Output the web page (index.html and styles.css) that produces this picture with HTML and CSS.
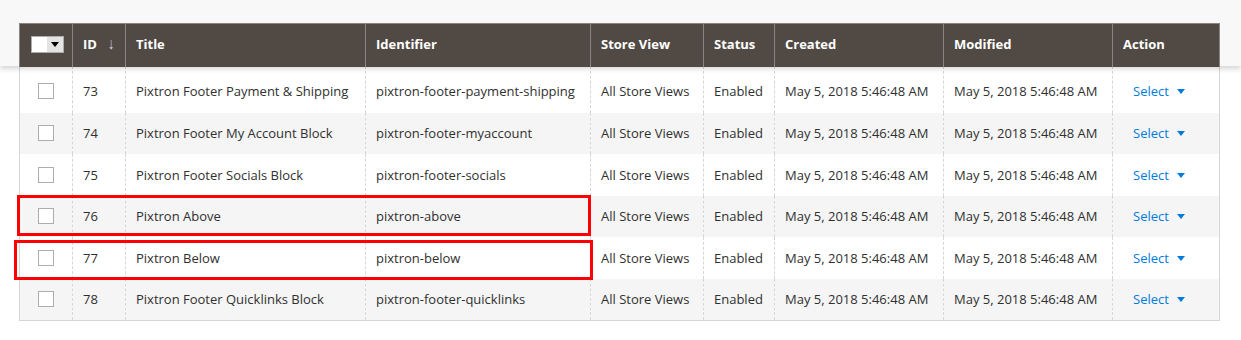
FILE: index.html
```html
<!DOCTYPE html>
<html>
<head>
<meta charset="utf-8">
<link rel="stylesheet" href="styles.css">
</head>
<body>
<div class="sticky">
  <table class="grid head">
    <colgroup><col class="c1"><col class="c2"><col class="c3"><col class="c4"><col class="c5"><col class="c6"><col class="c7"><col class="c8"><col class="c9"></colgroup>
    <tr>
      <th class="mass"><span class="mcheck"><span class="mbox"></span><span class="mdrop"><span class="tri"></span></span></span></th>
      <th>ID<span class="sort">↓</span></th>
      <th>Title</th>
      <th>Identifier</th>
      <th>Store View</th>
      <th>Status</th>
      <th>Created</th>
      <th>Modified</th>
      <th>Action</th>
    </tr>
  </table>
</div>
<table class="grid body">
  <colgroup><col class="c1"><col class="c2"><col class="c3"><col class="c4"><col class="c5"><col class="c6"><col class="c7"><col class="c8"><col class="c9"></colgroup>
  <tr class="first"><td class="cb"><span class="box"></span></td><td>73</td><td>Pixtron Footer Payment &amp; Shipping</td><td>pixtron-footer-payment-shipping</td><td>All Store Views</td><td>Enabled</td><td>May 5, 2018 5:46:48 AM</td><td>May 5, 2018 5:46:48 AM</td><td class="act"><a>Select <span class="atri"></span></a></td></tr>
  <tr class="alt"><td class="cb"><span class="box"></span></td><td>74</td><td>Pixtron Footer My Account Block</td><td>pixtron-footer-myaccount</td><td>All Store Views</td><td>Enabled</td><td>May 5, 2018 5:46:48 AM</td><td>May 5, 2018 5:46:48 AM</td><td class="act"><a>Select <span class="atri"></span></a></td></tr>
  <tr><td class="cb"><span class="box"></span></td><td>75</td><td>Pixtron Footer Socials Block</td><td>pixtron-footer-socials</td><td>All Store Views</td><td>Enabled</td><td>May 5, 2018 5:46:48 AM</td><td>May 5, 2018 5:46:48 AM</td><td class="act"><a>Select <span class="atri"></span></a></td></tr>
  <tr class="alt"><td class="cb"><span class="box"></span></td><td>76</td><td>Pixtron Above</td><td>pixtron-above</td><td>All Store Views</td><td>Enabled</td><td>May 5, 2018 5:46:48 AM</td><td>May 5, 2018 5:46:48 AM</td><td class="act"><a>Select <span class="atri"></span></a></td></tr>
  <tr><td class="cb"><span class="box"></span></td><td>77</td><td>Pixtron Below</td><td>pixtron-below</td><td>All Store Views</td><td>Enabled</td><td>May 5, 2018 5:46:48 AM</td><td>May 5, 2018 5:46:48 AM</td><td class="act"><a>Select <span class="atri"></span></a></td></tr>
  <tr class="alt"><td class="cb"><span class="box"></span></td><td>78</td><td>Pixtron Footer Quicklinks Block</td><td>pixtron-footer-quicklinks</td><td>All Store Views</td><td>Enabled</td><td>May 5, 2018 5:46:48 AM</td><td>May 5, 2018 5:46:48 AM</td><td class="act"><a>Select <span class="atri"></span></a></td></tr>
</table>
<div class="mark mark1"></div>
<div class="mark mark2"></div>
</body>
</html>
```
FILE: styles.css
```css
html, body { margin: 0; padding: 0; background: #fff; }
body { font-family: "Open Sans", "Liberation Sans", sans-serif; font-size: 13px; color: #303030; }

.sticky {
  position: relative;
  z-index: 2;
  height: 66px;
  box-sizing: border-box;
  padding: 23px 0 0 19px;
  background: #f8f8f8;
  box-shadow: 0 3px 5px rgba(0,0,0,0.16);
}

.grid { border-collapse: collapse; table-layout: fixed; width: 1200px; }
.c1 { width: 53px; } .c2 { width: 53px; } .c3 { width: 240px; } .c4 { width: 225px; }
.c5 { width: 113px; } .c6 { width: 71px; } .c7 { width: 169px; } .c8 { width: 169px; } .c9 { width: 107px; }

.head th {
  height: 43px;
  padding: 0 10px 3px;
  background: #514943;
  color: #fff;
  font-weight: 700;
  font-size: 13px;
  text-align: left;
  white-space: nowrap;
  border-left: 1px solid #8a837f;
  border-right: 1px solid #8a837f;
  border-top: 1px solid #8a837f;
  box-sizing: border-box;
}
.head th.mass { padding-left: 11px; padding-right: 0; }
.sort { display: inline-block; color: #d4d2e6; font-weight: 400; font-size: 16px; line-height: 13px; margin-left: 10px; vertical-align: 0; transform: scaleX(0.8); }
.mcheck { display: inline-flex; border: 1px solid #adadad; vertical-align: middle; }
.mbox { width: 15px; height: 15px; background: #fff; }
.mdrop { width: 16px; height: 15px; background: #e3e3e3; display: flex; align-items: center; justify-content: center; }
.tri { width: 0; height: 0; border-left: 4px solid transparent; border-right: 4px solid transparent; border-top: 5px solid #000; }

.body { margin-left: 19px; border: 1px solid #d6d6d6; border-top: 0; }
.body td {
  height: 41.5px;
  padding: 0 10px;
  border-left: 1px dashed #d6d6d6;
  border-right: 1px dashed #d6d6d6;
  white-space: nowrap;
  overflow: hidden;
  box-sizing: border-box;
}
.body td:first-child { border-left: 1px solid #d6d6d6; }
.body td:last-child { border-right: 1px solid #d6d6d6; }
.body tr.first td { height: 46.5px; padding-top: 4px; }
.body tr.alt td { background: #f5f5f5; }
.body td.cb { padding-left: 18px; }
.box { display: block; width: 14px; height: 14px; border: 1px solid #adadad; background: #fff; }
.act { padding-left: 20px !important; }
.act a { color: #007bdb; }
.atri { display: inline-block; width: 0; height: 0; margin-left: 5px; vertical-align: 2px; border-left: 4px solid transparent; border-right: 4px solid transparent; border-top: 5px solid #007bdb; }

.mark { position: absolute; border: 3px solid #ff0000; box-sizing: border-box; z-index: 3; }
.mark1 { left: 17px; top: 195px; width: 574px; height: 41px; }
.mark2 { left: 14px; top: 240px; width: 579px; height: 40px; }
```
